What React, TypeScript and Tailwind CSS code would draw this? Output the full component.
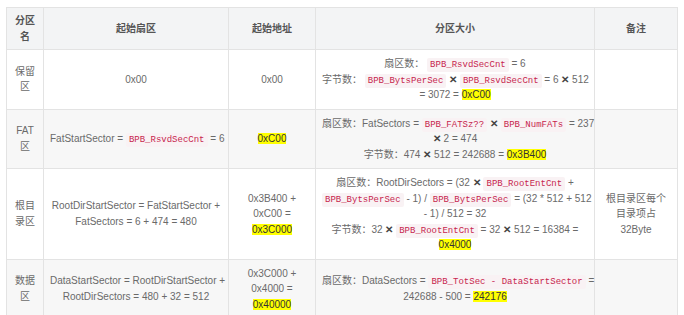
import type { ReactNode } from "react";

const Code = ({ children }: { children: ReactNode }) => (
  <span className="font-['Liberation_Mono','DejaVu_Sans_Mono',monospace] text-[9px] leading-none text-[#c7254e] bg-[#f9f2f4] px-[3px] py-[2px] rounded-[2px]">
    {children}
  </span>
);

const Mark = ({ children }: { children: ReactNode }) => (
  <span className="bg-[#ffff00] text-[#333]">{children}</span>
);

const X = () => <span className="text-[#444] font-bold leading-none">✕</span>;

const Lines = ({ lines }: { lines: ReactNode[] }) => (
  <>
    {lines.map((l, i) => (
      <div key={i} className="whitespace-nowrap">
        {l}
      </div>
    ))}
  </>
);

const th = "border border-[#e3e3e3] px-[6px] py-[5px] font-bold text-[#555] text-center align-middle";
const td = "border border-[#e3e3e3] px-[6px] py-[6px] text-center align-middle";

const rows: { bg: string; cells: ReactNode[] }[] = [
  {
    bg: "bg-white",
    cells: [
      <Lines lines={["保留", "区"]} />,
      "0x00",
      "0x00",
      <Lines
        lines={[
          <>扇区数： <Code>BPB_RsvdSecCnt</Code> = 6</>,
          <>字节数： <Code>BPB_BytsPerSec</Code> <X /> <Code>BPB_RsvdSecCnt</Code> = 6 <X /> 512</>,
          <>= 3072 = <Mark>0xC00</Mark></>,
        ]}
      />,
      "",
    ],
  },
  {
    bg: "bg-[#f7f7f7]",
    cells: [
      <Lines lines={["FAT", "区"]} />,
      <Lines lines={[<>FatStartSector = <Code>BPB_RsvdSecCnt</Code> = 6</>]} />,
      <Mark>0xC00</Mark>,
      <Lines
        lines={[
          <>扇区数：FatSectors = <Code>BPB_FATSz??</Code> <X /> <Code>BPB_NumFATs</Code> = 237</>,
          <><X /> 2 = 474</>,
          <>字节数：474 <X /> 512 = 242688 = <Mark>0x3B400</Mark></>,
        ]}
      />,
      "",
    ],
  },
  {
    bg: "bg-white",
    cells: [
      <Lines lines={["根目", "录区"]} />,
      <Lines lines={["RootDirStartSector = FatStartSector +", "FatSectors = 6 + 474 = 480"]} />,
      <Lines lines={["0x3B400 +", "0xC00 =", <Mark>0x3C000</Mark>]} />,
      <Lines
        lines={[
          <>扇区数：RootDirSectors = (32 <X /> <Code>BPB_RootEntCnt</Code> +</>,
          <><Code>BPB_BytsPerSec</Code> - 1) / <Code>BPB_BytsPerSec</Code> = (32 * 512 + 512</>,
          <>- 1) / 512 = 32</>,
          <>字节数：32 <X /> <Code>BPB_RootEntCnt</Code> = 32 <X /> 512 = 16384 =</>,
          <Mark>0x4000</Mark>,
        ]}
      />,
      <Lines lines={["根目录区每个", "目录项占", "32Byte"]} />,
    ],
  },
  {
    bg: "bg-[#f7f7f7]",
    cells: [
      <Lines lines={["数据", "区"]} />,
      <Lines lines={["DataStartSector = RootDirStartSector +", "RootDirSectors = 480 + 32 = 512"]} />,
      <Lines lines={["0x3C000 +", "0x4000 =", <Mark>0x40000</Mark>]} />,
      <Lines
        lines={[
          <>扇区数：DataSectors = <Code>BPB_TotSec - DataStartSector</Code> =</>,
          <>242688 - 500 = <Mark>242176</Mark></>,
        ]}
      />,
      "",
    ],
  },
];

export default function App() {
  return (
    <div className="w-[684px] h-[315px] overflow-hidden bg-white pt-[7px] pl-[6px] font-['Liberation_Sans','Noto_Sans_CJK_SC',sans-serif] text-[10px] leading-[15.5px] text-[#6a6a6a]">
      <table className="table-fixed border-collapse w-[671px]">
        <colgroup>
          <col className="w-[37px]" />
          <col className="w-[185px]" />
          <col className="w-[87px]" />
          <col className="w-[279px]" />
          <col className="w-[83px]" />
        </colgroup>
        <thead>
          <tr className="bg-[#f3f4f5] h-[42px]">
            <th className={th}>
              <Lines lines={["分区", "名"]} />
            </th>
            <th className={th}>起始扇区</th>
            <th className={th}>起始地址</th>
            <th className={th}>分区大小</th>
            <th className={th}>备注</th>
          </tr>
        </thead>
        <tbody>
          {rows.map((r, i) => (
            <tr key={i} className={r.bg}>
              {r.cells.map((c, j) => (
                <td key={j} className={td}>
                  {c}
                </td>
              ))}
            </tr>
          ))}
        </tbody>
      </table>
    </div>
  );
}
